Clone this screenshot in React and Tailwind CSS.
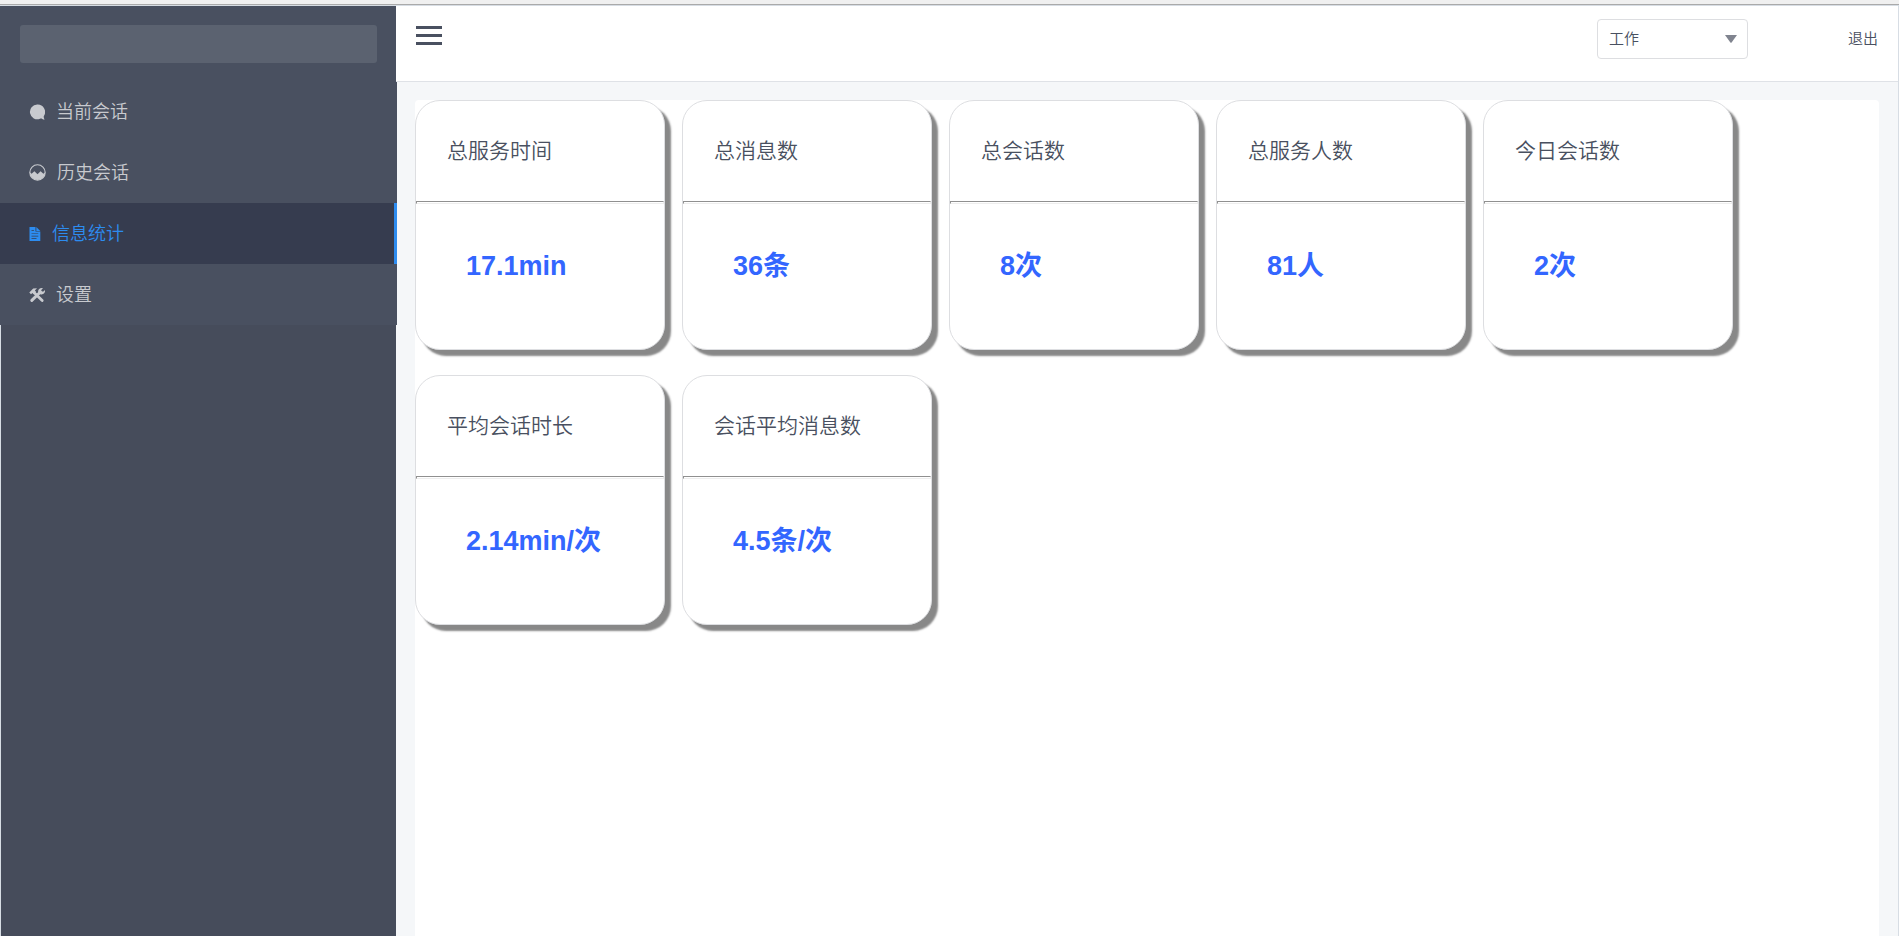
import React from "react";

const menu = [
  { label: "当前会话", icon: "chat", iconWidth: "w-4" },
  { label: "历史会话", icon: "history", iconWidth: "w-[17px]" },
  { label: "信息统计", icon: "document", iconWidth: "w-3", active: true },
  { label: "设置", icon: "tools", iconWidth: "w-4" },
];

const stats = [
  { title: "总服务时间", value: "17.1min" },
  { title: "总消息数", value: "36条" },
  { title: "总会话数", value: "8次" },
  { title: "总服务人数", value: "81人" },
  { title: "今日会话数", value: "2次" },
  { title: "平均会话时长", value: "2.14min/次" },
  { title: "会话平均消息数", value: "4.5条/次" },
];

function MenuIcon({ name }) {
  if (name === "chat") {
    return (
      <svg viewBox="0 0 16 16" className="h-4 w-4" fill="currentColor" aria-hidden="true">
        <path d="M8.200.5A7.400 7.400 0 1 0 11 14.800c.9-.4 1.600-.2 2.200.1l1.900.9c.2.1.4-.1.300-.3l-.6-2c-.2-.6-.1-1.100.1-1.600A7.400 7.400 0 0 0 8.200.5Z" />
      </svg>
    );
  }
  if (name === "history") {
    return (
      <svg viewBox="0 0 17 17" className="h-[17px] w-[17px]" aria-hidden="true">
        <circle cx="8.5" cy="8.500" r="7.700" fill="none" stroke="currentColor" strokeWidth="1.100" />
        <path
          d="M.8 8.300 2.600 9.800 5.400 7.200 8.500 10.200 11.600 7.200 14.400 9.800 16.200 8.300A7.700 7.700 0 0 1 .8 8.300Z"
          fill="currentColor"
        />
      </svg>
    );
  }
  if (name === "document") {
    return (
      <svg viewBox="0 0 12 16" className="h-4 w-3" fill="currentColor" aria-hidden="true">
        <path
          fillRule="evenodd"
          d="M.5 1h6v4.600h4.800V15H.5ZM2.500 4.200v.7h2.400v-.7Zm0 3.200v.6h6.800v-.6Zm0 2.400v.6h6.800v-.6Zm0 2.400v.7h5v-.7Z"
        />
        <path d="M7.300 1 11.300 4.900H7.300Z" />
      </svg>
    );
  }
  return (
    <svg viewBox="0 0 16 16" className="h-4 w-4" fill="none" stroke="currentColor" aria-hidden="true">
      <path d="M2.800 13.400 11.400 5" strokeWidth="3" strokeLinecap="round" />
      <path d="m5 5.500 8.200 8" strokeWidth="2.800" strokeLinecap="round" />
      <path
        d="M.3 5.600 4.200 1.400 8 1.200 5.900 3.400 7 4.800 4.800 7.200 3.500 6 2 7.300Z"
        fill="currentColor"
        stroke="none"
      />
      <path
        d="M13.900 1.200 12.100 3.200l.8 1.400 1.500-.1L16 2.900c.4 2.500-.9 4.400-3.300 4.600C10.700 7.600 9.100 6.400 9.100 4.500 9.100 2 11.300.6 13.900 1.200Z"
        fill="currentColor"
        stroke="none"
      />
    </svg>
  );
}

function Sidebar() {
  return (
    <aside className="flex w-[396px] shrink-0 flex-col">
      <div className="bg-[#495060] pt-[19px] pr-[19px] pb-[18px] pl-5">
        <div className="h-[38px] rounded-[3px] bg-[#5b6270]" />
      </div>
      <nav className="w-[397px] bg-[#495060]">
        {menu.map((item) => (
          <a
            key={item.label}
            href="#"
            aria-current={item.active ? "page" : undefined}
            className={
              item.active
                ? "flex h-[61px] items-center border-r-3 border-[#2d8cf0] bg-[#363c4f] pl-[29px] text-[#2d8cf0]"
                : "flex h-[61px] items-center pl-[29px] text-[#c8cacf]"
            }
          >
            <span className={`${item.iconWidth} flex shrink-0 items-center`}>
              <MenuIcon name={item.icon} />
            </span>
            <span className="ml-[11px] text-[18px] leading-6 font-[350]">{item.label}</span>
          </a>
        ))}
      </nav>
      <div className="flex-1 border-l border-[#d7dde4] bg-[#464c5b]" />
    </aside>
  );
}

function Header() {
  return (
    <header className="flex h-[76px] shrink-0 items-start border-b border-[#dfe2e7] bg-white pr-5 pl-5">
      <button type="button" aria-label="菜单" className="mt-5 flex w-[26px] flex-col gap-[5px] text-[#495060]">
        <span className="h-[3px] w-full bg-current" />
        <span className="h-[3px] w-full bg-current" />
        <span className="h-[3px] w-full bg-current" />
      </button>
      <div className="relative mt-[13px] ml-auto w-[151px]">
        <select
          aria-label="状态"
          defaultValue="工作"
          className="h-10 w-full appearance-none rounded border border-[#dddee1] bg-white pr-8 pl-[11px] text-[15px] font-[350] text-[#495060]"
        >
          <option>工作</option>
          <option>休息</option>
        </select>
        <svg
          viewBox="0 0 12 8"
          className="pointer-events-none absolute top-4 right-[11px] h-2 w-3"
          fill="#80848f"
          aria-hidden="true"
        >
          <path d="M0 0h12L6.600 7.400q-.6.6-1.200 0Z" />
        </svg>
      </div>
      <a href="#" className="mt-[21px] ml-[100px] text-[15px] leading-6 font-[350] text-[#495060]">
        退出
      </a>
    </header>
  );
}

function StatCard({ title, value }) {
  return (
    <section className="h-[250px] w-[250px] rounded-[25px] border border-[#dddee1] bg-white shadow-[6px_6px_2px_#888888]">
      <h2 className="flex h-[100px] items-center pl-[31px] text-[21px] font-[350] text-[#495060]">{title}</h2>
      <hr className="h-[3px] border border-t-[#909090] border-r-[#eeeeee] border-b-[#eeeeee] border-l-[#909090]" />
      <p className="mt-11 pl-[50px] text-[27px] leading-9 font-bold text-[#3366ff]">{value}</p>
    </section>
  );
}

export default function App() {
  return (
    <div className="flex min-h-screen flex-col bg-[#f5f7f9] font-['Liberation_Sans','Noto_Sans_CJK_SC',sans-serif]">
      <div className="h-[5px] shrink-0 border-b border-[#aaaaaa] bg-[#f0f0f0]" />
      <div className="flex flex-1 border-t border-r border-[#d7dde4]">
        <Sidebar />
        <div className="flex min-w-0 flex-1 flex-col">
          <Header />
          <main className="flex flex-1 flex-col pt-[18px] pr-[19px] pl-[19px]">
            <div className="flex flex-1 flex-wrap content-start gap-x-[17px] gap-y-[25px] rounded-t bg-white">
              {stats.map((stat) => (
                <StatCard key={stat.title} title={stat.title} value={stat.value} />
              ))}
            </div>
          </main>
        </div>
      </div>
    </div>
  );
}
